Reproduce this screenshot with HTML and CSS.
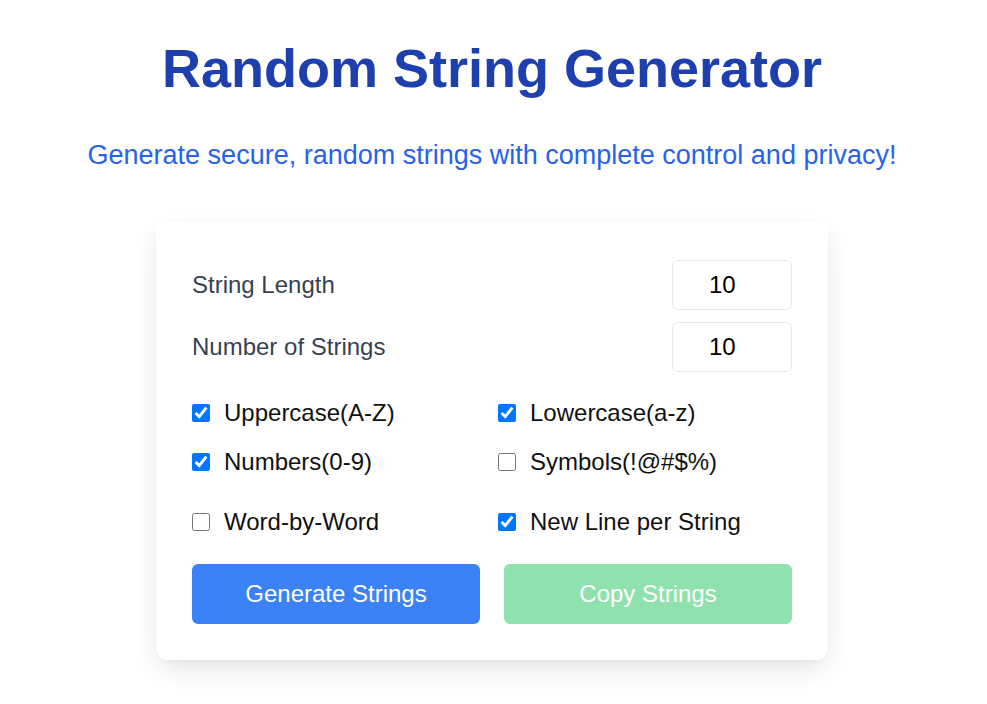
FILE: index.html
```html
<!DOCTYPE html>
<html lang="en">
<head>
<meta charset="utf-8">
<title>Random String Generator</title>
<link rel="stylesheet" href="styles.css">
</head>
<body>
<main class="page">
  <h1 class="title">Random String Generator</h1>
  <p class="subtitle">Generate secure, random strings with complete control and privacy!</p>
  <section class="card">
    <div class="field">
      <label class="field-label" for="len">String Length</label>
      <input class="field-input" id="len" type="text" value="10">
    </div>
    <div class="field">
      <label class="field-label" for="num">Number of Strings</label>
      <input class="field-input" id="num" type="text" value="10">
    </div>
    <div class="options">
      <label class="option"><input type="checkbox" checked><span>Uppercase(A-Z)</span></label>
      <label class="option"><input type="checkbox" checked><span>Lowercase(a-z)</span></label>
      <label class="option"><input type="checkbox" checked><span>Numbers(0-9)</span></label>
      <label class="option"><input type="checkbox"><span>Symbols(!@#$%)</span></label>
    </div>
    <div class="options options-extra">
      <label class="option"><input type="checkbox"><span>Word-by-Word</span></label>
      <label class="option"><input type="checkbox" checked><span>New Line per String</span></label>
    </div>
    <div class="actions">
      <button class="btn btn-generate" type="button">Generate Strings</button>
      <button class="btn btn-copy" type="button" disabled>Copy Strings</button>
    </div>
  </section>
</main>
</body>
</html>
```

FILE: styles.css
```css
* { box-sizing: border-box; }

html, body {
  margin: 0;
  padding: 0;
  background: #ffffff;
}

body {
  font-family: "Liberation Sans", Arial, sans-serif;
  color: #111827;
}

.page {
  display: flex;
  flex-direction: column;
  align-items: center;
  padding: 36px 3px 40px 0;
}

.title {
  margin: 0;
  font-size: 54px;
  line-height: 64px;
  font-weight: 700;
  color: #1e40af;
}

.subtitle {
  margin: 35px 0 0;
  font-size: 27px;
  line-height: 40px;
  color: #2563eb;
}

.card {
  width: 672px;
  margin-top: 47px;
  padding: 38px 36px 36px;
  background: #ffffff;
  border-radius: 12px;
  box-shadow: 0 10px 30px -4px rgba(0, 0, 0, 0.12), 0 4px 10px -4px rgba(0, 0, 0, 0.05);
  display: flex;
  flex-direction: column;
}

.field {
  display: flex;
  align-items: center;
  justify-content: space-between;
  height: 50px;
}

.field + .field { margin-top: 12px; }

.field-label {
  font-size: 24px;
  color: #374151;
}

.field-input {
  width: 120px;
  height: 50px;
  padding: 0 0 0 36px;
  border: 1px solid #e5e7eb;
  border-radius: 6px;
  font-family: "Liberation Sans", Arial, sans-serif;
  font-size: 24px;
  color: #000000;
  background: #ffffff;
  outline: none;
}

.options {
  display: grid;
  grid-template-columns: 294px 294px;
  column-gap: 12px;
  row-gap: 13px;
  margin-top: 23px;
}

.options-extra { margin-top: 24px; }

.option {
  display: flex;
  align-items: center;
  height: 36px;
  font-size: 24px;
  color: #111111;
}

.option input {
  width: 18px;
  height: 18px;
  margin: 0 14px 0 0;
  accent-color: #0075ff;
}

.actions {
  display: grid;
  grid-template-columns: 1fr 1fr;
  column-gap: 24px;
  margin-top: 24px;
}

.btn {
  height: 60px;
  border: none;
  border-radius: 6px;
  font-family: "Liberation Sans", Arial, sans-serif;
  font-size: 24px;
  color: #ffffff;
}

.btn-generate { background: #3b82f6; }

.btn-copy {
  background: #22c55e;
  opacity: 0.5;
}
```
